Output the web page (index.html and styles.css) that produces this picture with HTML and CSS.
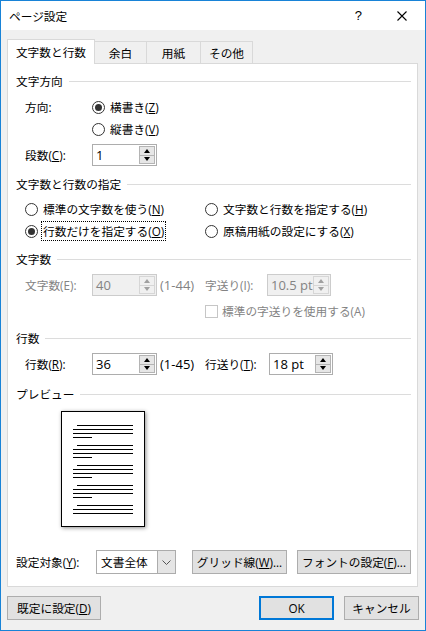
FILE: index.html
```html
<!DOCTYPE html>
<html lang="ja">
<head>
<meta charset="utf-8">
<title>ページ設定</title>
<link rel="stylesheet" href="styles.css">
</head>
<body>
<div class="window">
  <div class="titlebar">
    <span class="title">ページ設定</span>
    <span class="help">?</span>
    <span class="close"><svg width="10" height="10" viewBox="0 0 10 10"><path d="M0.5 0.5L9.5 9.5M9.5 0.5L0.5 9.5" stroke="#000" stroke-width="1.1"/></svg></span>
  </div>
  <div class="body">
    <div class="tabs">
      <div class="tab active">文字数と行数</div>
      <div class="tab t2">余白</div>
      <div class="tab t3">用紙</div>
      <div class="tab t4">その他</div>
    </div>
    <div class="panel">
      <div class="section s1"><span>文字方向</span><span class="rule"></span></div>
      <div class="row r-dir">
        <span class="lbl">方向:</span>
        <span class="radio checked"></span><span class="rtext">横書き(<u>Z</u>)</span>
      </div>
      <div class="row">
        <span class="lbl"></span>
        <span class="radio"></span><span class="rtext">縦書き(<u>V</u>)</span>
      </div>
      <div class="row r-cols">
        <span class="lbl">段数(<u>C</u>):</span>
        <span class="spin w65"><span class="val">1</span><span class="spinbtns"><span class="sb"><span class="up"></span></span><span class="sb"><span class="down"></span></span></span></span>
      </div>

      <div class="section s2"><span>文字数と行数の指定</span><span class="rule"></span></div>
      <div class="rgrid">
        <div class="ritem"><span class="radio"></span><span class="rtext">標準の文字数を使う(<u>N</u>)</span></div>
        <div class="ritem"><span class="radio"></span><span class="rtext">文字数と行数を指定する(<u>H</u>)</span></div>
        <div class="ritem"><span class="radio checked tight"></span><span class="focus">行数だけを指定する(<u>O</u>)</span></div>
        <div class="ritem"><span class="radio"></span><span class="rtext">原稿用紙の設定にする(<u>X</u>)</span></div>
      </div>

      <div class="section s3"><span>文字数</span><span class="rule"></span></div>
      <div class="row r-chars disabled">
        <span class="lbl">文字数(E):</span>
        <span class="spin w65 dis"><span class="val">40</span><span class="spinbtns"><span class="sb"><span class="up"></span></span><span class="sb"><span class="down"></span></span></span></span>
        <span class="range">(1-44)</span>
        <span class="lbl2 w62">字送り(I):</span>
        <span class="spin w64 dis"><span class="val">10.5 pt</span><span class="spinbtns"><span class="sb"><span class="up"></span></span><span class="sb"><span class="down"></span></span></span></span>
      </div>
      <div class="crow disabled">
        <span class="check"></span><span>標準の字送りを使用する(A)</span>
      </div>

      <div class="section s4"><span>行数</span><span class="rule"></span></div>
      <div class="row r-lines">
        <span class="lbl">行数(<u>R</u>):</span>
        <span class="spin w65"><span class="val">36</span><span class="spinbtns"><span class="sb"><span class="up"></span></span><span class="sb"><span class="down"></span></span></span></span>
        <span class="range">(1-45)</span>
        <span class="lbl2 w64">行送り(<u>T</u>):</span>
        <span class="spin w64"><span class="val">18 pt</span><span class="spinbtns"><span class="sb"><span class="up"></span></span><span class="sb"><span class="down"></span></span></span></span>
      </div>

      <div class="section s5"><span>プレビュー</span><span class="rule"></span></div>
      <div class="page">
        <svg width="82" height="114" viewBox="0 0 82 114">
          <g fill="#000">
            <rect x="15" y="13" width="56" height="1"/><rect x="11" y="17" width="60" height="1"/><rect x="11" y="21" width="60" height="1"/><rect x="11" y="25" width="19" height="1"/>
            <rect x="15" y="33" width="56" height="1"/><rect x="11" y="37" width="60" height="1"/><rect x="11" y="41" width="60" height="1"/><rect x="11" y="45" width="19" height="1"/>
            <rect x="15" y="53" width="56" height="1"/><rect x="11" y="57" width="60" height="1"/><rect x="11" y="61" width="60" height="1"/><rect x="11" y="65" width="19" height="1"/>
            <rect x="15" y="73" width="56" height="1"/><rect x="11" y="77" width="60" height="1"/><rect x="11" y="81" width="60" height="1"/><rect x="11" y="85" width="19" height="1"/>
            <rect x="15" y="93" width="56" height="1"/><rect x="11" y="97" width="60" height="1"/><rect x="11" y="101" width="60" height="1"/>
          </g>
        </svg>
      </div>

      <div class="brow">
        <span class="blbl">設定対象(<u>Y</u>):</span>
        <span class="combo"><span class="cval">文書全体</span><span class="carrow"><svg width="9" height="5" viewBox="0 0 9 5"><path d="M0.5 0.5L4.5 4.5L8.5 0.5" fill="none" stroke="#555" stroke-width="1"/></svg></span></span>
        <span class="btn b-grid">グリッド線(<u>W</u>)...</span>
        <span class="btn b-font">フォントの設定(<u>F</u>)...</span>
      </div>
    </div>
    <div class="footer">
      <span class="btn b-def">既定に設定(<u>D</u>)</span>
      <span class="btn b-ok">OK</span>
      <span class="btn b-cancel">キャンセル</span>
    </div>
  </div>
</div>
</body>
</html>
```

FILE: styles.css
```css
* { box-sizing: border-box; }
html, body { margin: 0; padding: 0; }
body {
  font-family: "Open Sans", "Noto Sans CJK JP", sans-serif;
  font-size: 11.7px;
  line-height: 16px;
  color: #000;
  background: #fff;
}
u { text-decoration: underline; text-underline-offset: 1px; }

.window {
  width: 426px;
  height: 631px;
  border: 1px solid #1883d7;
  background: #f0f0f0;
  display: flex;
  flex-direction: column;
}
.titlebar {
  height: 29px;
  flex: none;
  background: #fff;
  display: flex;
  align-items: center;
}
.title { margin-left: 8px; }
.help { margin-left: auto; margin-right: 35px; font-size: 13px; font-family: "Liberation Sans", sans-serif; }
.close { width: 10px; height: 10px; margin-right: 18px; display: flex; }

.body {
  flex: 1;
  padding: 9px 0 0 6px;
  display: flex;
  flex-direction: column;
}
.tabs {
  display: flex;
  align-items: flex-end;
  height: 24px;
}
.tab {
  height: 22px;
  border: 1px solid #d9d9d9;
  border-bottom: none;
  background: #f0f0f0;
  display: flex;
  align-items: center;
  justify-content: center;
  margin-left: -1px;
}
.tab.active {
  height: 25px;
  width: 88px;
  margin-left: 0;
  margin-bottom: -1px;
  background: #fff;
  position: relative;
  z-index: 1;
}
.t2 { width: 53px; }
.t3 { width: 55px; }
.t4 { width: 53px; }

.panel {
  width: 411px;
  height: 524px;
  border: 1px solid #d9d9d9;
  background: #fff;
  padding: 9px 6px 12px 8px;
  display: flex;
  flex-direction: column;
}
.section {
  height: 16px;
  display: flex;
  align-items: center;
  flex: none;
}
.rule { flex: 1; height: 1px; background: #dcdcdc; margin-left: 6px; }
.s2 { margin-top: 10px; }
.s3 { margin-top: 9px; }
.s4 { margin-top: 11px; }
.s5 { margin-top: 11px; }

.row {
  height: 22px;
  display: flex;
  align-items: center;
  padding-left: 9px;
  flex: none;
}
.r-dir { margin-top: 7px; }
.r-cols { margin-top: 4px; }
.r-chars { margin-top: 7px; }
.r-lines { margin-top: 7px; }
.lbl { width: 67px; flex: none; }
.lbl2 { flex: none; }
.w62 { width: 62px; }
.w64 { width: 64px; }
.range { width: 48px; padding-left: 3px; flex: none; font-size: 13px; }

.radio {
  width: 13px;
  height: 13px;
  border: 1px solid #333;
  border-radius: 50%;
  background: #fff;
  display: flex;
  align-items: center;
  justify-content: center;
  flex: none;
  margin-right: 5px;
}
.radio.checked::after {
  content: "";
  width: 7px;
  height: 7px;
  border-radius: 50%;
  background: #333;
}
.radio.tight { margin-right: 3px; }

.rgrid {
  margin-top: 6px;
  padding-left: 9px;
  display: grid;
  grid-template-columns: 180px auto;
  grid-auto-rows: 22px;
}
.ritem { display: flex; align-items: center; }
.focus {
  border: 1px dotted #000;
  padding: 1px 1px;
}

.disabled { color: #838383; }
.crow {
  margin-top: 7px;
  height: 16px;
  display: flex;
  align-items: center;
  padding-left: 189px;
}
.check {
  width: 13px;
  height: 13px;
  border: 1px solid #c6c6c6;
  background: #fff;
  margin-right: 4px;
  flex: none;
}

.spin {
  height: 22px;
  border: 1px solid #adadad;
  background: #fff;
  display: flex;
  align-items: stretch;
  flex: none;
}
.spin.w65 { width: 65px; }
.spin.w64 { width: 64px; }
.spin .val { flex: 1; padding-left: 3px; display: flex; align-items: center; font-size: 13px; }
.spin.dis { background: #f0f0f0; border-color: #cccccc; }
.spinbtns {
  width: 17px;
  display: flex;
  flex-direction: column;
  padding: 1px 1px 1px 0;
}
.sb {
  flex: 1;
  border: 1px solid #b4b4b4;
  background: #e6e6e6;
  display: flex;
  align-items: center;
  justify-content: center;
}
.sb + .sb { border-top: none; }
.dis .sb { border-color: #d6d6d6; background: #f0f0f0; }
.up { width: 0; height: 0; border-left: 3.5px solid transparent; border-right: 3.5px solid transparent; border-bottom: 4px solid #000; }
.down { width: 0; height: 0; border-left: 3.5px solid transparent; border-right: 3.5px solid transparent; border-top: 4px solid #000; }
.dis .up { border-bottom-color: #a0a0a0; }
.dis .down { border-top-color: #a0a0a0; }

.page {
  margin-top: 9px;
  margin-left: 45px;
  width: 84px;
  height: 116px;
  border: 1px solid #000;
  background: #fff;
  box-shadow: 1px 1px 4px rgba(0,0,0,0.45);
  flex: none;
}
.page svg { display: block; }

.brow {
  margin-top: 23px;
  height: 24px;
  display: flex;
  align-items: center;
  flex: none;
}
.blbl { width: 80px; flex: none; }
.combo {
  width: 80px;
  height: 24px;
  border: 1px solid #acacac;
  background: #fff;
  display: flex;
  flex: none;
}
.cval { flex: 1; padding-left: 4px; display: flex; align-items: center; }
.carrow {
  width: 18px;
  background: #e5e5e5;
  border-left: 1px solid #acacac;
  display: flex;
  align-items: center;
  justify-content: center;
}

.btn {
  height: 24px;
  border: 1px solid #adadad;
  background: #e1e1e1;
  display: flex;
  align-items: center;
  justify-content: center;
  flex: none;
}
.b-grid { width: 95px; margin-left: 16px; }
.b-font { width: 114px; margin-left: 10px; }

.footer {
  margin-top: 9px;
  display: flex;
  align-items: center;
  padding-right: 6px;
}
.b-def { width: 94px; }
.b-ok { width: 75px; margin-left: auto; border: 2px solid #0078d7; }
.b-cancel { width: 75px; margin-left: 10px; }
```
